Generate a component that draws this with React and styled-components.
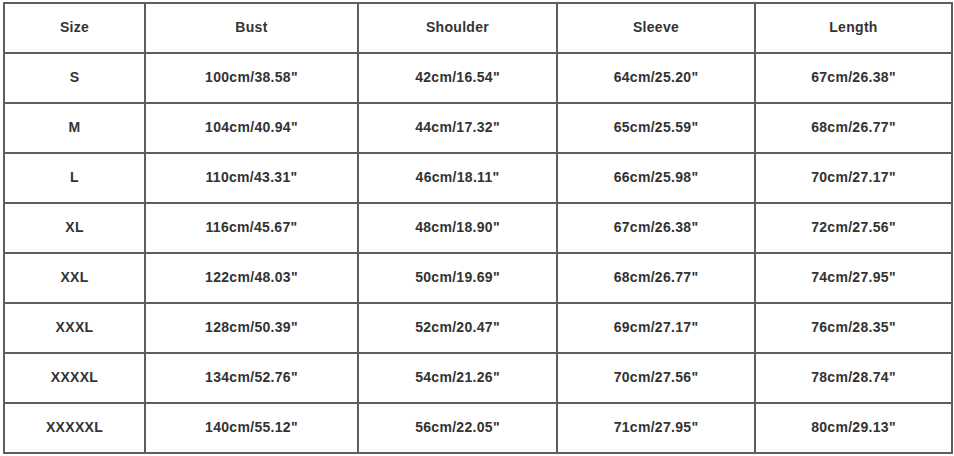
import React from "react";
import styled, { createGlobalStyle } from "styled-components";

const Global = createGlobalStyle`
  html, body { margin: 0; padding: 0; background: #ffffff; }
  body { font-family: "Liberation Sans", Arial, sans-serif; }
`;

const Page = styled.div`
  padding: 2px 0 0 3px;
  width: 954px;
  height: 456px;
  box-sizing: border-box;
  background: #fff;
`;

const Table = styled.table`
  border-collapse: collapse;
  table-layout: fixed;
  width: 948px;
`;

const Col = styled.col`
  width: ${(p) => p.$w}px;
`;

const Cell = styled.td`
  height: 45px;
  padding: 0 0 3px 0;
  border: 2px solid #5e5e5e;
  text-align: center;
  vertical-align: middle;
  font-family: "Liberation Sans", Arial, sans-serif;
  font-weight: bold;
  font-size: 14px;
  letter-spacing: 0.3px;
  color: #333333;
  white-space: nowrap;
`;

const HeadCell = styled(Cell).attrs({ as: "th" })`
  font-weight: bold;
`;

const widths = [141, 213, 199, 198, 197];
const headers = ["Size", "Bust", "Shoulder", "Sleeve", "Length"];
const rows = [
  ["S", '100cm/38.58"', '42cm/16.54"', '64cm/25.20"', '67cm/26.38"'],
  ["M", '104cm/40.94"', '44cm/17.32"', '65cm/25.59"', '68cm/26.77"'],
  ["L", '110cm/43.31"', '46cm/18.11"', '66cm/25.98"', '70cm/27.17"'],
  ["XL", '116cm/45.67"', '48cm/18.90"', '67cm/26.38"', '72cm/27.56"'],
  ["XXL", '122cm/48.03"', '50cm/19.69"', '68cm/26.77"', '74cm/27.95"'],
  ["XXXL", '128cm/50.39"', '52cm/20.47"', '69cm/27.17"', '76cm/28.35"'],
  ["XXXXL", '134cm/52.76"', '54cm/21.26"', '70cm/27.56"', '78cm/28.74"'],
  ["XXXXXL", '140cm/55.12"', '56cm/22.05"', '71cm/27.95"', '80cm/29.13"'],
];

export default function App() {
  return (
    <>
      <Global />
      <Page>
        <Table>
          <colgroup>
            {widths.map((w, i) => (
              <Col key={i} $w={w} />
            ))}
          </colgroup>
          <thead>
            <tr>
              {headers.map((h) => (
                <HeadCell key={h}>{h}</HeadCell>
              ))}
            </tr>
          </thead>
          <tbody>
            {rows.map((r) => (
              <tr key={r[0]}>
                {r.map((c, i) => (
                  <Cell key={i}>{c}</Cell>
                ))}
              </tr>
            ))}
          </tbody>
        </Table>
      </Page>
    </>
  );
}
